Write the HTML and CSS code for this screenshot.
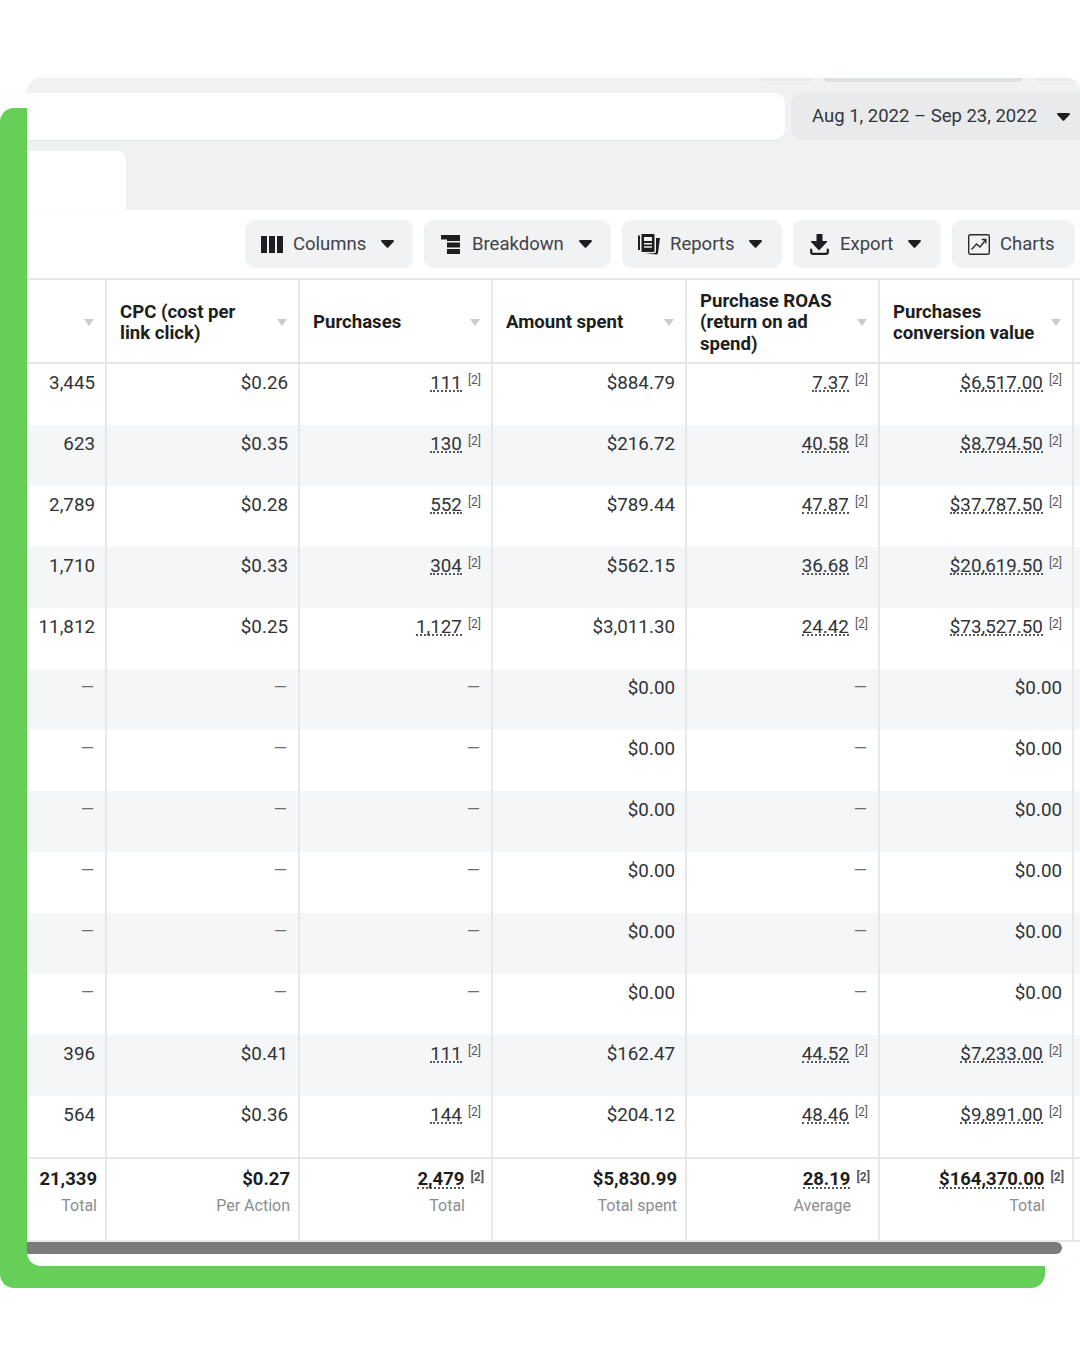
FILE: index.html
```html
<!DOCTYPE html>
<html lang="en">
<head>
<meta charset="utf-8">
<title>Ads report</title>
<link rel="stylesheet" href="styles.css">
</head>
<body>
<div class="stage">
  <div class="green"></div>
  <main class="panel">
    <section class="band">
      <div class="strip"><i class="stub s1"></i><i class="stub s2"></i><i class="stub s3"></i></div>
      <div class="search-row">
        <div class="search"></div>
        <button class="date">Aug 1, 2022 – Sep 23, 2022<svg class="caret date-caret" viewBox="0 0 13 8"><path d="M1.2 0h10.6c1 0 1.5 1.1.8 1.8L7.3 7.4c-.5.5-1.2.5-1.6 0L.4 1.8C-.3 1.1.2 0 1.2 0z"/></svg></button>
      </div>
      <div class="tab"></div>
    </section>
    <section class="toolbar">
      <button class="btn b-col"><svg class="ico" width="22" height="17" viewBox="0 0 22 17"><path d="M0 0h6v17H0zM8 0h6v17H8zM16 0h6v17h-6z"/></svg>Columns<svg class="caret" viewBox="0 0 13 8"><path d="M1.2 0h10.6c1 0 1.5 1.1.8 1.8L7.3 7.4c-.5.5-1.2.5-1.6 0L.4 1.8C-.3 1.1.2 0 1.2 0z"/></svg></button>
      <button class="btn b-brk"><svg class="ico" width="20" height="19" viewBox="0 0 20 19"><path d="M0 0h19v6H6V4.500H0zM6 7.500h13v5H6zM6 14h13v5H6z"/></svg>Breakdown<svg class="caret" viewBox="0 0 13 8"><path d="M1.2 0h10.6c1 0 1.5 1.1.8 1.8L7.3 7.4c-.5.5-1.2.5-1.6 0L.4 1.8C-.3 1.1.2 0 1.2 0z"/></svg></button>
      <button class="btn b-rep"><svg class="ico" width="22" height="21" viewBox="0 0 22 21"><path d="M0 1.5h2V16H0zM3.5 0h12c.6 0 1 .4 1 1v16c0 .6-.4 1-1 1h-12zM6 3v4h8V3zM6 9v1.6h8V9zM6 12.200v1.600h8v-1.600z" fill-rule="evenodd"/><path d="M18 4h4l-2 15c-.1.9-.9 1.600-1.800 1.500L6.500 19.300h9.500c1 0 2-.9 2-2z"/></svg>Reports<svg class="caret" viewBox="0 0 13 8"><path d="M1.2 0h10.6c1 0 1.5 1.1.8 1.8L7.3 7.4c-.5.5-1.2.5-1.6 0L.4 1.8C-.3 1.1.2 0 1.2 0z"/></svg></button>
      <button class="btn b-exp"><svg class="ico" width="19" height="21" viewBox="0 0 19 21"><path d="M6.500 0h6v7h4c.6 0 .9.700.5 1.100l-7.500 8c-.3.300-.7.300-1 0L1 8.100C.6 7.700.9 7 1.500 7h5z"/><path d="M1.200 15.500v2.500c0 1 .8 1.800 1.800 1.800h13c1 0 1.800-.8 1.800-1.800v-2.500" fill="none" stroke="currentColor" stroke-width="2.200" stroke-linecap="round"/></svg>Export<svg class="caret" viewBox="0 0 13 8"><path d="M1.2 0h10.6c1 0 1.5 1.1.8 1.8L7.3 7.4c-.5.5-1.2.5-1.6 0L.4 1.8C-.3 1.1.2 0 1.2 0z"/></svg></button>
      <button class="btn b-cht"><svg class="ico" width="22" height="21" viewBox="0 0 22 21"><rect x=".7" y=".7" width="20.600" height="19.600" rx="1.500" fill="none" stroke="currentColor" stroke-width="1.400"/><path d="M3.500 15.500l5-5.500 3.500 3 5.500-7M13.800 5.500h4v4" fill="none" stroke="currentColor" stroke-width="1.400"/></svg>Charts</button>
    </section>

    <section class="table">
      <div class="row head">
        <div class="hc"><span></span><i class="sort"></i></div>
        <div class="hc"><span>CPC (cost per<br>link click)</span><i class="sort"></i></div>
        <div class="hc"><span>Purchases</span><i class="sort"></i></div>
        <div class="hc"><span>Amount spent</span><i class="sort"></i></div>
        <div class="hc"><span>Purchase ROAS<br>(return on ad<br>spend)</span><i class="sort"></i></div>
        <div class="hc"><span>Purchases<br>conversion value</span><i class="sort"></i></div>
        <div class="hc end"></div>
      </div>

      <div class="row">
        <div class="c">3,445</div><div class="c">$0.26</div>
        <div class="c"><span class="u">111</span><sup class="ref">[2]</sup></div>
        <div class="c">$884.79</div>
        <div class="c"><span class="u">7.37</span><sup class="ref">[2]</sup></div>
        <div class="c"><span class="u">$6,517.00</span><sup class="ref">[2]</sup></div>
        <div class="c end"></div>
      </div>
      <div class="row alt">
        <div class="c">623</div><div class="c">$0.35</div>
        <div class="c"><span class="u">130</span><sup class="ref">[2]</sup></div>
        <div class="c">$216.72</div>
        <div class="c"><span class="u">40.58</span><sup class="ref">[2]</sup></div>
        <div class="c"><span class="u">$8,794.50</span><sup class="ref">[2]</sup></div>
        <div class="c end"></div>
      </div>
      <div class="row">
        <div class="c">2,789</div><div class="c">$0.28</div>
        <div class="c"><span class="u">552</span><sup class="ref">[2]</sup></div>
        <div class="c">$789.44</div>
        <div class="c"><span class="u">47.87</span><sup class="ref">[2]</sup></div>
        <div class="c"><span class="u">$37,787.50</span><sup class="ref">[2]</sup></div>
        <div class="c end"></div>
      </div>
      <div class="row alt">
        <div class="c">1,710</div><div class="c">$0.33</div>
        <div class="c"><span class="u">304</span><sup class="ref">[2]</sup></div>
        <div class="c">$562.15</div>
        <div class="c"><span class="u">36.68</span><sup class="ref">[2]</sup></div>
        <div class="c"><span class="u">$20,619.50</span><sup class="ref">[2]</sup></div>
        <div class="c end"></div>
      </div>
      <div class="row">
        <div class="c">11,812</div><div class="c">$0.25</div>
        <div class="c"><span class="u">1,127</span><sup class="ref">[2]</sup></div>
        <div class="c">$3,011.30</div>
        <div class="c"><span class="u">24.42</span><sup class="ref">[2]</sup></div>
        <div class="c"><span class="u">$73,527.50</span><sup class="ref">[2]</sup></div>
        <div class="c end"></div>
      </div>
      <div class="row alt">
        <div class="c dash">—</div><div class="c dash">—</div><div class="c dash">—</div>
        <div class="c">$0.00</div><div class="c dash">—</div><div class="c">$0.00</div><div class="c end"></div>
      </div>
      <div class="row">
        <div class="c dash">—</div><div class="c dash">—</div><div class="c dash">—</div>
        <div class="c">$0.00</div><div class="c dash">—</div><div class="c">$0.00</div><div class="c end"></div>
      </div>
      <div class="row alt">
        <div class="c dash">—</div><div class="c dash">—</div><div class="c dash">—</div>
        <div class="c">$0.00</div><div class="c dash">—</div><div class="c">$0.00</div><div class="c end"></div>
      </div>
      <div class="row">
        <div class="c dash">—</div><div class="c dash">—</div><div class="c dash">—</div>
        <div class="c">$0.00</div><div class="c dash">—</div><div class="c">$0.00</div><div class="c end"></div>
      </div>
      <div class="row alt">
        <div class="c dash">—</div><div class="c dash">—</div><div class="c dash">—</div>
        <div class="c">$0.00</div><div class="c dash">—</div><div class="c">$0.00</div><div class="c end"></div>
      </div>
      <div class="row">
        <div class="c dash">—</div><div class="c dash">—</div><div class="c dash">—</div>
        <div class="c">$0.00</div><div class="c dash">—</div><div class="c">$0.00</div><div class="c end"></div>
      </div>
      <div class="row alt">
        <div class="c">396</div><div class="c">$0.41</div>
        <div class="c"><span class="u">111</span><sup class="ref">[2]</sup></div>
        <div class="c">$162.47</div>
        <div class="c"><span class="u">44.52</span><sup class="ref">[2]</sup></div>
        <div class="c"><span class="u">$7,233.00</span><sup class="ref">[2]</sup></div>
        <div class="c end"></div>
      </div>
      <div class="row">
        <div class="c">564</div><div class="c">$0.36</div>
        <div class="c"><span class="u">144</span><sup class="ref">[2]</sup></div>
        <div class="c">$204.12</div>
        <div class="c"><span class="u">48.46</span><sup class="ref">[2]</sup></div>
        <div class="c"><span class="u">$9,891.00</span><sup class="ref">[2]</sup></div>
        <div class="c end"></div>
      </div>

      <div class="row foot">
        <div class="f"><div class="fv">21,339</div><div class="fl">Total</div></div>
        <div class="f"><div class="fv">$0.27</div><div class="fl">Per Action</div></div>
        <div class="f tight"><div class="fv"><span class="u">2,479</span><sup class="ref">[2]</sup></div><div class="fl offset">Total</div></div>
        <div class="f"><div class="fv">$5,830.99</div><div class="fl">Total spent</div></div>
        <div class="f"><div class="fv"><span class="u">28.19</span><sup class="ref">[2]</sup></div><div class="fl offset">Average</div></div>
        <div class="f"><div class="fv"><span class="u">$164,370.00</span><sup class="ref">[2]</sup></div><div class="fl offset">Total</div></div>
        <div class="f end"></div>
      </div>
    </section>
    <div class="track"><div class="thumb"></div></div>
  </main>
</div>
</body>
</html>
```

FILE: styles.css
```css
* { box-sizing: border-box; }
html, body { margin: 0; background: #fff; }
body { font-family: Roboto, "Liberation Sans", sans-serif; color: #1c1e21; }

.stage {
  position: relative;
  width: 1080px;
  height: 1350px;
  padding: 78px 0 0 27px;
  overflow: hidden;
}
.green {
  position: absolute;
  left: 0;
  top: 108px;
  width: 1045px;
  height: 1180px;
  background: #66cf58;
  border-radius: 14px;
}
.panel {
  position: relative;
  width: 1053px;
  height: 1188px;
  background: #fff;
  border-radius: 14px;
  overflow: hidden;
  box-shadow: 0 0 2px rgba(0, 0, 0, .06);
}

/* top grey band */
.band { height: 132px; background: #f0f2f2; }
.strip { height: 15px; display: flex; justify-content: flex-end; }
.stub { display: block; height: 3px; border-radius: 0 0 6px 6px; background: #e9ebeb; }
.s1 { width: 52px; margin-right: 12px; }
.s2 { width: 198px; height: 4px; margin-right: 14px; background: #dde1e1; }
.s3 { width: 44px; }
.search-row { height: 47px; display: flex; gap: 6px; }
.search {
  flex: 1;
  background: #fff;
  border-radius: 0 10px 10px 0;
  box-shadow: 0 1px 2px rgba(0, 0, 0, .06);
}
.date {
  width: 289px;
  display: flex;
  align-items: center;
  padding: 0 0 2px 21px;
  border: 0;
  border-radius: 10px 0 0 10px;
  background: #e8eaeb;
  font: 400 18.500px/24px Roboto, sans-serif;
  color: #33363a;
}
.date-caret { margin-left: 20px; margin-top: 2px; }
.tab {
  width: 99px;
  height: 59px;
  margin-top: 11px;
  background: #fff;
  border-radius: 0 8px 0 0;
  box-shadow: 0 0 2px rgba(0, 0, 0, .05);
}

/* toolbar */
.toolbar {
  height: 68px;
  display: flex;
  align-items: center;
  justify-content: flex-end;
  gap: 11px;
  padding-right: 5px;
}
.btn {
  height: 48px;
  display: flex;
  align-items: center;
  border: 0;
  padding: 0;
  border-radius: 9px;
  background: #f1f2f3;
  font: 400 18.500px/24px Roboto, sans-serif;
  color: #3f4246;
}
.ico { flex: none; fill: #1c1e21; color: #1c1e21; }
.caret { flex: none; width: 13px; height: 8px; fill: #1c1e21; }
.b-col { width: 168px; padding-left: 16px; }
.b-col .ico { margin-right: 10px; }
.b-col .caret { margin-left: 15px; }
.b-brk { width: 187px; padding-left: 17px; }
.b-brk .ico { margin-right: 11px; }
.b-brk .caret { margin-left: 15px; }
.b-rep { width: 160px; padding-left: 16px; }
.b-rep .ico { margin-right: 10px; }
.b-rep .caret { margin-left: 15px; }
.b-exp { width: 148px; padding-left: 17px; }
.b-exp .ico { margin-right: 11px; }
.b-exp .caret { margin-left: 15px; }
.b-cht { width: 123px; padding-left: 16px; }
.b-cht .ico { margin-right: 10px; }
.b-cht .ico { fill: none; color: #2a2c30; }

/* table */
.table { border-top: 2px solid #e3e5e7; }
.row {
  display: grid;
  grid-template-columns: 80px 193px 193px 194px 193px 194px 6px;
  height: 61px;
}
.alt { background: #f4f6f7; }
.head {
  height: 84px;
  border-bottom: 2px solid #e3e5e7;
  background: #fff;
}
.hc, .c, .f { border-right: 2px solid #e6e8ea; }
.hc {
  display: flex;
  align-items: center;
  justify-content: space-between;
  padding: 4px 11px 0 13px;
  font-weight: 700;
  font-size: 18.600px;
  line-height: 21.500px;
  color: #1c1e21;
}
.sort {
  display: block;
  width: 0;
  height: 0;
  margin-top: -2px;
  border-left: 5.500px solid transparent;
  border-right: 5.500px solid transparent;
  border-top: 7px solid #c9cccf;
}
.c {
  display: flex;
  justify-content: flex-end;
  align-items: flex-start;
  gap: 6px;
  padding: 7px 10px 0 0;
  font-size: 18.800px;
  line-height: 24px;
  color: #303338;
}
.u {
  display: block;
  height: 21px;
  border-bottom: 2px dotted #55585c;
}
.ref {
  font-size: 12px;
  line-height: 14px;
  margin-top: 2px;
  color: #55585c;
  vertical-align: baseline;
}
.dash { font-size: 17px; color: #6b6e72; padding: 6px 11px 0 0; }
.end { border-right: 0; padding: 0; }

.foot {
  height: 85px;
  border-top: 2px solid #e6e8ea;
  border-bottom: 2px solid #e6e8ea;
  background: #fff;
}
.f { padding: 8px 8px 0 0; text-align: right; }
.tight { padding-right: 7px; }
.fv {
  display: flex;
  justify-content: flex-end;
  gap: 6px;
  min-height: 24px;
  font-weight: 700;
  font-size: 18.500px;
  line-height: 24px;
  color: #1c1e21;
}
.fv .u { height: 22px; }
.fv .ref { margin-top: 3px; }
.fl { margin-top: 4px; font-size: 16px; line-height: 22px; color: #8a8d91; }
.offset { margin-right: 19px; }

.track { height: 12px; }
.thumb {
  width: 1035px;
  height: 12px;
  background: #7b7b7b;
  border-radius: 0 6px 6px 0;
}
```
